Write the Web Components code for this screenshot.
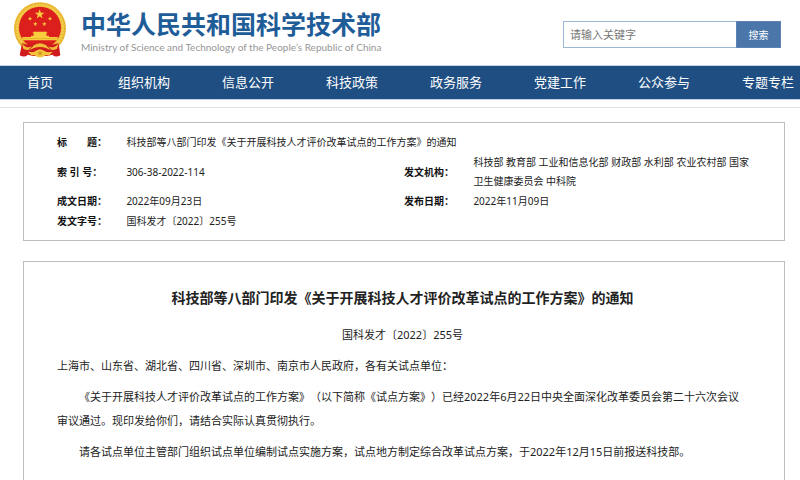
<!DOCTYPE html>
<html lang="zh-CN">
<head>
<meta charset="utf-8">
<meta name="viewport" content="width=device-width, initial-scale=1">
<title>科技部等八部门印发《关于开展科技人才评价改革试点的工作方案》的通知</title>
<style>
  body {
    margin: 0;
    background: #fff;
    color: #222;
    font-family: "Noto Sans", "Noto Sans CJK SC", sans-serif;
    font-size: 11px;
    text-spacing-trim: space-all;
  }
  main {
    display: flex;
    flex-direction: column;
    gap: 20px;
    margin-top: 7px;
    padding: 14px 15px 0 23px;
    border-top: 1px solid #e2e2e6;
  }
</style>
</head>
<body>
<site-header>
  <national-emblem slot="emblem"></national-emblem>
  <site-brand slot="brand">
    <span>中华人民共和国科学技术部</span>
    <span slot="latin">Ministry of Science and Technology of the People’s Republic of China</span>
  </site-brand>
  <search-box slot="search"></search-box>
</site-header>
<site-nav>
  <nav-item>首页</nav-item>
  <nav-item>组织机构</nav-item>
  <nav-item>信息公开</nav-item>
  <nav-item>科技政策</nav-item>
  <nav-item>政务服务</nav-item>
  <nav-item>党建工作</nav-item>
  <nav-item>公众参与</nav-item>
  <nav-item>专题专栏</nav-item>
</site-nav>
<main>
  <document-meta></document-meta>
  <notice-article>
    <span slot="title">科技部等八部门印发《关于开展科技人才评价改革试点的工作方案》的通知</span>
    <span slot="number">国科发才〔2022〕255号</span>
    <span slot="recipients">上海市、山东省、湖北省、四川省、深圳市、南京市人民政府，各有关试点单位：</span>
    <notice-paragraph>《关于开展科技人才评价改革试点的工作方案》（以下简称《试点方案》）已经2022年6月22日中央全面深化改革委员会第二十六次会议审议通过。现印发给你们，请结合实际认真贯彻执行。</notice-paragraph>
    <notice-paragraph>请各试点单位主管部门组织试点单位编制试点实施方案，试点地方制定综合改革试点方案，于2022年12月15日前报送科技部。</notice-paragraph>
  </notice-article>
</main>
<script>
  const define = (name, html) => {
    const template = document.createElement("template");
    template.innerHTML = html;
    customElements.define(name, class extends HTMLElement {
      constructor() {
        super();
        this.attachShadow({ mode: "open" }).append(template.content.cloneNode(true));
      }
    });
  };

  define("site-header", `
    <style>
      :host { display: block; }
      header { display: flex; align-items: flex-start; padding: 2px 19px 7px 13px; }
      .search { margin-left: auto; padding-top: 19px; }
      .brand { padding: 4px 0 0 14px; }
    </style>
    <header>
      <slot name="emblem"></slot>
      <div class="brand"><slot name="brand"></slot></div>
      <div class="search"><slot name="search"></slot></div>
    </header>`);

  define("national-emblem", `
    <style>:host { display: block; } svg { display: block; width: 54px; height: 56px; }</style>
    <svg viewBox="39 5 162 168" role="img" aria-label="国徽">
      <defs>
        <path id="star" d="M0-10 2.4-3.2 9.5-3.1 3.8 1.2 5.9 8.1 0 4-5.9 8.1-3.8 1.2-9.5-3.1-2.4-3.2Z"/>
      </defs>
      <circle cx="120" cy="84" r="78" fill="#edbd38"/>
      <circle cx="120" cy="84" r="75" fill="none" stroke="#e0a52b" stroke-width="3" stroke-dasharray="4 5"/>
      <circle cx="120" cy="84" r="69" fill="none" stroke="#f5d052" stroke-width="5" stroke-dasharray="7 3"/>
      <circle cx="120" cy="82" r="63" fill="#dc1f1c"/>
      <g fill="#f7ce3d">
        <use href="#star" transform="translate(119 42) scale(1.5)"/>
        <use href="#star" transform="translate(90 55) scale(.7)"/>
        <use href="#star" transform="translate(150 55) scale(.7)"/>
        <use href="#star" transform="translate(106 71) scale(.7)"/>
        <use href="#star" transform="translate(133 71) scale(.7)"/>
        <path d="M101 94H139L143 99H139V107H101V99H97Z"/>
        <path d="M67 110H173V120H67ZM93 106H147V110H93Z"/>
      </g>
      <path d="M67 115H173" stroke="#e3a62b" stroke-width="2"/>
      <path d="M66 129Q88 137 103 130Q120 121 137 130Q152 137 176 129L181 165Q167 173 157 163L141 167H99L84 163Q73 173 59 165Z" fill="#cf1b1e"/>
      <path d="M66 130Q84 150 103 134Q120 124 137 134Q157 150 176 130L171 145Q156 154 138 143Q120 137 102 143Q84 154 70 145Z" fill="#f1bd36"/>
      <path d="M84 154Q103 158 108 151Q120 142 132 151Q139 158 158 154L148 165H136Q120 178 104 165H94Z" fill="#f3c43c"/>
      <circle cx="120" cy="159" r="6" fill="#d99a22"/>
      <path d="M99 137 86 149M141 137 155 149" stroke="#d22a1d" stroke-width="3"/>
    </svg>`);

  define("site-brand", `
    <style>
      :host { display: block; }
      a { display: block; color: inherit; text-decoration: none; }
      .name { font-size: 25px; line-height: 36px; font-weight: 700; color: #1f5d98; }
      .latin { font-family: Lato, sans-serif; font-size: 10px; line-height: 10px; color: #969696; }
      div { white-space: nowrap; }
    </style>
    <a href="#">
      <div class="name"><slot></slot></div>
      <div class="latin"><slot name="latin"></slot></div>
    </a>`);

  define("search-box", `
    <style>
      :host { display: block; }
      form { display: flex; margin: 0; height: 27px; }
      input, button { font-family: inherit; box-sizing: border-box; margin: 0; border-radius: 0; }
      input {
        width: 173px; padding: 0 6px; font-size: 11px; color: #333;
        border: 1px solid #9fb7d6; border-right: 0; background: #fff; outline: 0;
      }
      input::placeholder { color: #777; opacity: 1; }
      button {
        width: 45px; padding: 0; font-size: 10px; color: #fff;
        border: 1px solid #5d83b3; background: #4b76a9;
      }
    </style>
    <form role="search">
      <input type="text" placeholder="请输入关键字" aria-label="请输入关键字">
      <button type="button">搜索</button>
    </form>`);

  define("site-nav", `
    <style>
      :host { display: block; overflow: hidden; background: #1e4e82; border-block: 1px solid #c3d3e5; }
      nav { display: flex; margin: 0 -20px 0 -12px; }
    </style>
    <nav><slot></slot></nav>`);

  define("nav-item", `
    <style>
      :host { display: block; flex: 1 1 0; text-align: center; }
      a { display: block; font-size: 13px; line-height: 33px; color: #fff; text-decoration: none; white-space: nowrap; }
    </style>
    <a href="#"><slot></slot></a>`);

  define("document-meta", `
    <style>
      :host { display: block; border: 1px solid #bdbdbd; padding: 9px 33px 8px; }
      table { width: 100%; table-layout: fixed; border-collapse: separate; border-spacing: 0 1px; font-size: 10px; line-height: 19px; }
      th, td { padding: 0; text-align: left; vertical-align: middle; }
      th { font-weight: 700; color: #111; white-space: pre; }
      .label { width: 10%; }
    </style>
    <table>
      <colgroup><col class="label"><col><col class="label"><col></colgroup>
      <tr><th scope="row">标　　题：</th><td colspan="3">科技部等八部门印发《关于开展科技人才评价改革试点的工作方案》的通知</td></tr>
      <tr>
        <th scope="row">索 引 号：</th><td>306-38-2022-114</td>
        <th scope="row">发文机构：</th><td>科技部 教育部 工业和信息化部 财政部 水利部 农业农村部 国家卫生健康委员会 中科院</td>
      </tr>
      <tr>
        <th scope="row">成文日期：</th><td>2022年09月23日</td>
        <th scope="row">发布日期：</th><td>2022年11月09日</td>
      </tr>
      <tr><th scope="row">发文字号：</th><td colspan="3">国科发才〔2022〕255号</td></tr>
    </table>`);

  define("notice-article", `
    <style>
      :host { display: block; border: 1px solid #bdbdbd; border-bottom: 0; padding: 24px 36px 16px 33px; }
      h1 { margin: 0 0 13px; font-size: 14px; line-height: 24px; font-weight: 700; text-align: center; }
      p { margin: 0 0 7px; line-height: 24px; }
      .number { text-align: center; }
    </style>
    <article>
      <h1><slot name="title"></slot></h1>
      <p class="number"><slot name="number"></slot></p>
      <p><slot name="recipients"></slot></p>
      <slot></slot>
    </article>`);

  define("notice-paragraph", `
    <style>
      :host { display: block; }
      p { margin: 0 0 7px; line-height: 24px; text-indent: 2em; }
    </style>
    <p><slot></slot></p>`);
</script>
</body>
</html>
